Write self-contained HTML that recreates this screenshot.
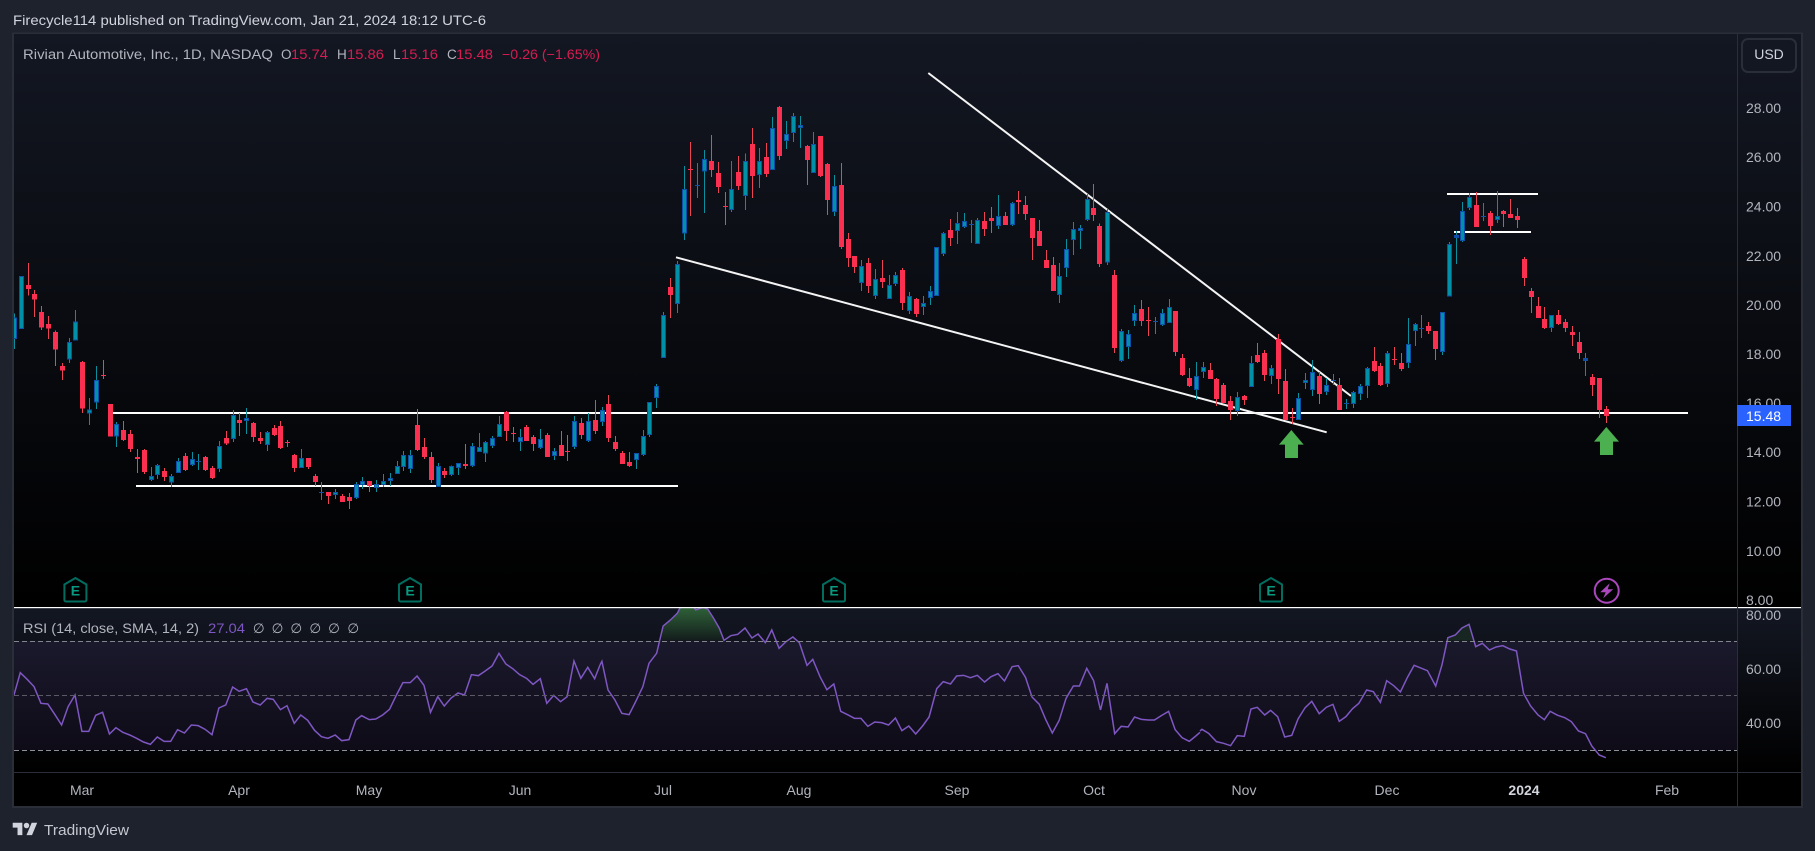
<!DOCTYPE html>
<html>
<head>
<meta charset="utf-8">
<title>Rivian Automotive, Inc. chart</title>
<style>
html,body{margin:0;padding:0;background:#1e222d;width:1815px;height:851px;overflow:hidden}
svg{display:block}
text{font-family:"Liberation Sans","DejaVu Sans",sans-serif}
.rw{stroke:#ec4452;stroke-width:3;fill:none}
.rb{stroke:#fb2f50;stroke-width:15;fill:none}
.tw{stroke:#0a8f9f;stroke-width:3;fill:none}
.tb{fill:#0090a8;stroke:#0f4fa8;stroke-width:3}
.bd{stroke:#0f4fa8;stroke-width:15;fill:none}
.ax{fill:#b2b5be;font-size:14px}
.lg{fill:#b2b5be;font-size:13.5px}
.rd{fill:#d81b50;font-size:13.5px}
.e{fill:none;stroke:#006d5f;stroke-width:2}
.et{fill:#089981;font-size:14px;font-weight:bold;text-anchor:middle}
.rsi{fill:none;stroke:#7e57c2;stroke-width:1.5;vector-effect:non-scaling-stroke}
.tm{fill:#b2b5be;font-size:14px;text-anchor:middle}
</style>
</head>
<body>
<svg xmlns="http://www.w3.org/2000/svg" width="1815" height="851" viewBox="0 0 1815 851">
<defs>
<linearGradient id="g1" x1="0" y1="0" x2="0" y2="1"><stop offset="0" stop-color="#131722"/><stop offset="1" stop-color="#000"/></linearGradient>
<linearGradient id="gg" gradientUnits="userSpaceOnUse" x1="0" y1="112" x2="0" y2="212"><stop offset="0" stop-color="#2f6238"/><stop offset="1" stop-color="#131c1c"/></linearGradient>
<clipPath id="cm"><rect x="14" y="34" width="1723" height="573"/></clipPath>
<clipPath id="cr"><rect x="14" y="608" width="1723" height="164"/></clipPath>
</defs>

<rect width="1815" height="851" fill="#1e222d"/>
<rect x="13" y="33.5" width="1789" height="773.5" fill="none" stroke="#2a2e39" stroke-width="2"/>
<rect x="14" y="34" width="1787" height="573" fill="url(#g1)"/>
<rect x="14" y="608" width="1787" height="165" fill="url(#g1)"/>
<rect x="14" y="773" width="1787" height="33" fill="#000"/>

<!-- header text -->
<text x="13" y="25" font-size="14" fill="#d1d4dc" textLength="473" lengthAdjust="spacingAndGlyphs">Firecycle114 published on TradingView.com, Jan 21, 2024 18:12 UTC-6</text>
<text x="23" y="59" class="lg" textLength="250" lengthAdjust="spacingAndGlyphs">Rivian Automotive, Inc., 1D, NASDAQ</text>
<text x="281" y="59" class="lg">O</text><text x="291" y="59" class="rd" textLength="37" lengthAdjust="spacingAndGlyphs">15.74</text>
<text x="337" y="59" class="lg">H</text><text x="347" y="59" class="rd" textLength="37" lengthAdjust="spacingAndGlyphs">15.86</text>
<text x="393" y="59" class="lg">L</text><text x="401" y="59" class="rd" textLength="37" lengthAdjust="spacingAndGlyphs">15.16</text>
<text x="447" y="59" class="lg">C</text><text x="456" y="59" class="rd" textLength="37" lengthAdjust="spacingAndGlyphs">15.48</text>
<text x="502" y="59" class="rd" textLength="98" lengthAdjust="spacingAndGlyphs">−0.26 (−1.65%)</text>

<!-- main chart -->
<g clip-path="url(#cm)">
<!-- drawn lines, below candles -->
<g fill="#fff">
<rect x="110" y="412" width="1578" height="2"/>
<rect x="136" y="485" width="542" height="2"/>
<rect x="1447" y="193" width="91" height="2"/>
<rect x="1454" y="231" width="77" height="2"/>
</g>
<path d="M676 257.3L1326.7 432.3M928.3 73L1351 396" stroke="#f4f4f4" stroke-width="2" fill="none"/>

<g shape-rendering="crispEdges">
<g transform="translate(0,240) scale(.33333)">
<path class="rw" d="M85 69V167M103 150V231M124 198V270M145 228V297M166 272V378M187 369V420M247 363V519M310 360V417M370 543V603M391 570V636M412 627V699M433 627V702M493 684V723M556 639V693M616 648V693M637 678V717M679 573V615M718 519V588M760 546V606M781 576V612M823 555V588M841 543V627M862 600V621M883 642V696M925 654V687M946 702V738M985 756V792M1027 762V786M1048 759V807M1108 723V756M1252 507V633M1273 594V657M1294 636V729M1333 684V714"/>
<path class="rb" d="M85 135V147M103 162V179M124 216V263M145 252V266M166 276V329M187 378V392M247 366V506M310 405V408M331 492V590M370 570V600M391 582V627M412 651V657M433 630V696M493 693V711M556 648V690M616 651V690M637 684V714M679 594V610M718 540V549M760 549V591M781 594V603M823 564V585M841 558V624M862 606V609M883 645V684M925 654V681M946 708V726M985 756V768M1027 768V786M1048 771V783M1108 723V738M1252 555V630M1273 621V651M1294 651V720M1333 693V705"/>
<path class="tw" d="M43 220V327M208 294V369M226 210V302M268 474V555M289 378V507M349 546V621M454 681V723M472 672V717M514 702V741M535 654V699M577 636V678M595 642V690M658 603V696M700 510V606M739 504V582M802 573V633M904 627V684M964 726V780M1006 747V777M1069 726V777M1087 711V747M1129 720V756M1150 702V741M1171 699V738M1192 663V702M1210 633V693M1231 630V699M1315 669V741"/>
<path class="tb" d="M37 234h12V296h-12zM58 110h12V266h-12zM202 308h12V357h-12zM220 246h12V300h-12zM262 510h12V519h-12zM283 422h12V486h-12zM343 554h12V588h-12zM448 710h12V718h-12zM466 677h12V703h-12zM508 710h12V726h-12zM529 665h12V697h-12zM571 659h12V673h-12zM652 620h12V685h-12zM694 527h12V595h-12zM733 536h12V541h-12zM796 578h12V613h-12zM898 656h12V682h-12zM1000 758h12V763h-12zM1063 734h12V772h-12zM1081 725h12V733h-12zM1123 734h12V742h-12zM1144 725h12V733h-12zM1165 716h12V721h-12zM1186 680h12V700h-12zM1204 647h12V679h-12zM1225 647h12V685h-12zM1309 680h12V739h-12z"/>
<path class="bd" d="M595 663V666M964 756V759"/>
</g>
<g transform="translate(450,240) scale(.33333)">
<path class="rw" d="M46 612V687M169 513V603M190 561V606M229 555V603M250 585V633M292 579V651M334 573V648M352 585V663M394 534V597M436 480V582M475 465V606M496 588V633M517 633V672M538 636V681M661 114V234"/>
<path class="rb" d="M46 672V678M169 516V573M190 579V582M229 561V603M250 591V612M292 585V651M334 615V648M352 633V636M394 549V585M436 540V573M475 492V594M496 606V627M517 639V672M538 666V678M661 141V165"/>
<path class="tw" d="M4 676V708M25 669V705M67 609V681M88 579V636M106 603V666M127 588V624M148 528V591M211 567V633M271 567V627M313 624V660M373 528V627M415 519V606M457 501V558M559 639V687M580 570V648M598 486V591M619 432V504M640 216V354M682 63V219"/>
<path class="tb" d="M-2 680h12V703h-12zM19 671h12V682h-12zM61 620h12V676h-12zM82 623h12V634h-12zM100 608h12V639h-12zM121 596h12V616h-12zM142 554h12V589h-12zM205 593h12V604h-12zM265 599h12V622h-12zM307 635h12V646h-12zM367 545h12V619h-12zM409 545h12V601h-12zM451 512h12V544h-12zM553 641h12V658h-12zM574 590h12V643h-12zM592 488h12V583h-12zM613 440h12V472h-12zM634 227h12V352h-12zM676 74h12V190h-12z"/>
</g>
<g transform="translate(650,90) scale(.33333)">
<path class="rw" d="M121 156V378M184 135V261M205 216V309M226 306V405M265 198V300M307 114V324M349 159V261M388 48V210M472 165V285M511 138V261M532 219V375M574 219V477M595 429V531M613 498V549M655 504V609M697 510V594M757 534V660M799 624V681M901 387V468M1003 366V438M1024 351V429M1066 366V405M1105 303V372M1126 318V390M1147 384V510M1168 390V468M1189 480V534M1210 501V603M1330 282V393M1348 400V531"/>
<path class="rb" d="M121 237V240M184 213V240M205 249V291M226 348V351M265 246V288M307 162V258M349 201V252M388 51V198M472 168V210M511 138V258M532 222V330M574 285V471M595 447V504M613 498V531M655 519V588M697 564V576M757 540V639M799 627V672M901 420V444M1003 393V417M1024 384V393M1066 378V405M1105 330V336M1126 345V372M1147 384V444M1168 423V468M1189 510V534M1210 525V603M1330 354V375M1348 408V522"/>
<path class="tw" d="M103 228V450M142 219V324M163 180V369M244 213V366M286 190V360M328 174V294M367 81V240M409 93V177M430 69V156M451 78V174M490 126V249M553 255V378M634 510V603M676 537V627M718 555V627M736 546V588M778 606V672M820 618V675M841 588V645M880 426V498M922 366V462M943 369V414M964 390V459M982 384V462M1045 315V417M1087 336V408M1228 519V639M1249 447V561M1270 396V495M1291 405V477M1312 312V393"/>
<path class="tb" d="M97 299h12V429h-12zM157 209h12V243h-12zM238 299h12V358h-12zM280 215h12V316h-12zM322 215h12V253h-12zM361 116h12V238h-12zM403 134h12V151h-12zM424 80h12V127h-12zM445 107h12V112h-12zM484 164h12V247h-12zM547 290h12V364h-12zM628 530h12V577h-12zM670 569h12V616h-12zM712 587h12V625h-12zM730 557h12V580h-12zM772 620h12V661h-12zM814 641h12V649h-12zM835 605h12V622h-12zM853 473h12V616h-12zM874 431h12V490h-12zM916 401h12V421h-12zM937 395h12V409h-12zM976 392h12V460h-12zM1039 380h12V406h-12zM1081 341h12V403h-12zM1222 560h12V613h-12zM1243 479h12V532h-12zM1264 419h12V448h-12zM1285 416h12V421h-12zM1306 329h12V388h-12z"/>
<path class="bd" d="M142 285V288M964 402V405"/>
</g>
<g transform="translate(1050,260) scale(.33333)">
<path class="rw" d="M193 30V279M274 120V198M295 141V228M376 153V288M397 282V348M418 324V381M481 309V357M499 354V438M520 369V432M541 408V480M583 405V435M622 249V309M643 270V363M685 222V402M706 327V480M727 444V492M808 336V432M868 354V450M973 261V336M991 309V378M1033 261V315M1054 279V333M1135 186V222M1156 213V300"/>
<path class="rb" d="M193 45V264M274 147V183M295 180V183M376 153V276M397 294V345M418 354V378M481 330V357M499 357V417M520 375V429M541 423V450M583 408V420M622 285V306M643 279V345M685 237V357M706 363V480M727 471V474M808 348V402M868 375V450M973 303V333M991 318V375M1033 297V300M1054 309V327M1135 198V213M1156 213V267"/>
<path class="tw" d="M172 -156V15M214 207V306M235 210V297M253 135V198M316 171V222M337 147V198M358 117V189M439 306V420M460 306V354M562 396V468M604 288V381M664 315V372M745 399V480M766 339V387M787 300V408M829 354V405M850 342V375M889 417V447M910 393V444M931 372V420M952 321V414M1012 273V381M1075 174V324M1096 189V258M1114 165V234M1177 156V285"/>
<path class="tb" d="M166 -142h12V6h-12zM208 215h12V301h-12zM229 224h12V259h-12zM247 161h12V181h-12zM331 161h12V193h-12zM352 143h12V187h-12zM433 350h12V388h-12zM454 323h12V334h-12zM556 413h12V451h-12zM598 311h12V379h-12zM658 326h12V346h-12zM739 416h12V478h-12zM760 362h12V367h-12zM781 338h12V388h-12zM823 377h12V394h-12zM904 398h12V430h-12zM925 380h12V400h-12zM946 326h12V376h-12zM1006 281h12V370h-12zM1069 254h12V307h-12zM1090 194h12V211h-12zM1171 158h12V274h-12z"/>
<path class="bd" d="M316 183V186M850 360V363M889 429V432M1114 204V207"/>
</g>
<g transform="translate(1420,170) scale(.33333)">
<path class="rw" d="M169 66V171M211 123V195M250 120V171M271 87V144M292 114V174M313 261V348M334 354V429M355 381V444M373 411V477M415 420V465M436 447V486M457 468V528M478 486V567M517 612V678M538 624V744M559 708V759"/>
<path class="rb" d="M169 105V171M211 129V168M250 123V132M271 132V144M292 138V150M313 267V324M334 363V381M355 408V444M373 447V474M415 435V462M436 456V474M457 486V495M478 516V549M517 621V645M538 624V720M559 717V738"/>
<path class="tw" d="M88 216V380M109 183V282M127 96V216M148 69V120M190 99V153M232 63V159M394 435V486M496 549V618"/>
<path class="tb" d="M82 224h12V378h-12zM121 125h12V211h-12zM142 83h12V112h-12zM226 140h12V148h-12zM388 437h12V472h-12z"/>
<path class="bd" d="M109 195V204M190 138V141M496 564V573"/>
</g>
</g>

<!-- arrows -->
<g transform="translate(1050,260) scale(.33333)"><path d="M724 510L761 554H744V594H705V554H687Z" fill="#4caf50"/></g>
<g transform="translate(1420,170) scale(.33333)"><path d="M559 771L597 815H579V855H540V815H522Z" fill="#4caf50"/></g>

<!-- earnings -->
<g transform="translate(75.4,577)"><path class="e" d="M0 1L11 7.5V23a1.5 1.5 0 0 1-1.5 1.5H-9.5A1.5 1.5 0 0 1-11 23V7.5Z"/><text class="et" y="18.5">E</text></g>
<g transform="translate(410,577)"><path class="e" d="M0 1L11 7.5V23a1.5 1.5 0 0 1-1.5 1.5H-9.5A1.5 1.5 0 0 1-11 23V7.5Z"/><text class="et" y="18.5">E</text></g>
<g transform="translate(834,577)"><path class="e" d="M0 1L11 7.5V23a1.5 1.5 0 0 1-1.5 1.5H-9.5A1.5 1.5 0 0 1-11 23V7.5Z"/><text class="et" y="18.5">E</text></g>
<g transform="translate(1271,577)"><path class="e" d="M0 1L11 7.5V23a1.5 1.5 0 0 1-1.5 1.5H-9.5A1.5 1.5 0 0 1-11 23V7.5Z"/><text class="et" y="18.5">E</text></g>
<g transform="translate(1606.7,590.7)"><circle r="12" fill="none" stroke="#ab47bc" stroke-width="2"/><path d="M3-7.5L-6.5 1.5H-1L-3.5 7.5L6.5-1.5H1Z" fill="#ab47bc"/></g>
</g>

<!-- RSI -->
<rect x="14" y="641" width="1723" height="109" fill="#7e57c2" fill-opacity=".1"/>
<g clip-path="url(#cr)">
<g transform="translate(600,570) scale(.38265,.33333)"><path d="M160 212L165 168L184 150L202 130L215 100L250 100L282 118L297 145L312 175L324 212Z" fill="url(#gg)"/></g>
<g transform="translate(1200,570) scale(.39216,.33333)"><path d="M632 212V203L651 195L668 174L686 163L698 212Z" fill="#172621"/></g>
<g transform="translate(0,570) scale(.38265,.33333)"><path class="rsi" d="M36 377L53 308L71 328L89 350L107 400L125 402L143 433L161 465L178 410L196 375L214 484L232 484L250 436L268 427L286 492L303 473L321 487L339 495L357 505L375 516L393 523L411 501L429 514L446 514L464 479L482 489L500 465L518 467L536 478L554 494L572 414L590 405L608 351L625 364L644 356L661 396L680 405L698 385L714 388L733 419L750 407L769 460L786 435L804 451L822 481L840 500L857 505L876 495L893 512L912 509L930 450L945 437L965 449L982 447L1000 435L1018 418L1036 375L1053 338L1072 338L1090 318L1108 346L1125 427L1144 380L1161 408L1179 384L1197 369L1214 375L1232 314L1250 317L1268 303L1286 288L1304 250L1322 282L1340 296L1358 314L1376 325L1393 343L1412 326L1429 400L1447 376L1465 395L1482 380L1500 273L1518 325L1536 292L1554 326L1568 285"/></g>
<g transform="translate(600,570) scale(.38265,.33333)"><path class="rsi" d="M0 285L5 274L21 360L39 390L57 430L76 434L94 393L112 350L128 280L148 250L165 168L184 150L202 130L215 100L235 90L250 120L270 112L282 118L297 145L312 175L324 211L342 197L360 193L379 174L397 204L413 192L432 218L449 180L468 235L486 215L504 201L521 218L541 286L556 268L575 320L593 359L611 342L629 424L647 434L665 445L682 445L700 469L718 456L736 458L754 465L772 444L789 482L807 468L825 492L843 468L860 441L880 356L897 335L916 342L932 318L950 316L968 323L986 316L1005 336L1022 320L1040 311L1057 333L1077 290L1093 287L1112 322L1129 381L1148 403L1165 449L1182 489L1200 451L1218 385L1237 348L1253 348L1272 295L1290 332L1308 420L1325 340L1345 491L1362 469L1380 471L1397 441L1415 448L1433 450L1449 450L1468 436L1486 424L1503 479L1521 503L1540 514L1557 498L1568 487"/></g>
<g transform="translate(1200,570) scale(.39216,.33333)"><path class="rsi" d="M0 483L5 478L22 490L42 515L60 520L78 527L95 497L113 499L130 417L146 412L165 435L180 421L198 440L216 501L234 496L250 447L268 413L285 394L304 431L322 412L339 403L355 454L372 440L389 416L405 400L425 360L442 365L460 397L476 332L494 347L511 366L529 322L546 286L580 302L601 348L617 285L632 203L651 195L668 174L686 163L703 230L720 220L738 240L755 231L772 227L790 237L807 243L825 370L843 408L862 435L878 449L893 424L912 436L930 443L947 455L965 483L983 491L999 528L1018 555L1035 563"/></g>
</g>
<g fill="none" stroke-dasharray="5 3" shape-rendering="crispEdges">
<path d="M14 641.5H1737" stroke="#85858f"/>
<path d="M14 695.5H1737" stroke="#5c5a66"/>
<path d="M14 750.5H1737" stroke="#8f8f99"/>
</g>
<text x="23" y="633" class="lg" textLength="176" lengthAdjust="spacingAndGlyphs">RSI (14, close, SMA, 14, 2)</text>
<text x="208" y="633" font-size="13.5" fill="#7e57c2" textLength="37" lengthAdjust="spacingAndGlyphs">27.04</text>
<g class="lg" text-anchor="middle"><text x="258.7" y="633">∅</text><text x="277.5" y="633">∅</text><text x="296.2" y="633">∅</text><text x="315.3" y="633">∅</text><text x="334" y="633">∅</text><text x="353.2" y="633">∅</text></g>

<!-- frame lines -->
<rect x="14" y="607" width="1787" height="1.2" fill="#fff"/>
<rect x="14" y="772" width="1787" height="1" fill="#2a2e39"/>
<rect x="1737" y="34" width="1" height="772" fill="#2a2e39"/>

<!-- price axis -->
<rect x="1742" y="39" width="54" height="33" rx="6" fill="#131722" stroke="#2a2e39" stroke-width="2"/>
<text x="1769" y="59" font-size="14" fill="#d1d4dc" text-anchor="middle">USD</text>
<g class="ax">
<text x="1746" y="113">28.00</text>
<text x="1746" y="162">26.00</text>
<text x="1746" y="211.5">24.00</text>
<text x="1746" y="261">22.00</text>
<text x="1746" y="310">20.00</text>
<text x="1746" y="359">18.00</text>
<text x="1746" y="408">16.00</text>
<text x="1746" y="457">14.00</text>
<text x="1746" y="506.5">12.00</text>
<text x="1746" y="556">10.00</text>
<text x="1746" y="605">8.00</text>
<text x="1746" y="620">80.00</text>
<text x="1746" y="674">60.00</text>
<text x="1746" y="728">40.00</text>
</g>
<rect x="1737" y="405" width="54" height="21" fill="#2962ff"/>
<text x="1746" y="421" font-size="14" fill="#fff">15.48</text>

<!-- time axis -->
<g class="tm">
<text x="82" y="795">Mar</text>
<text x="239" y="795">Apr</text>
<text x="369" y="795">May</text>
<text x="520" y="795">Jun</text>
<text x="663" y="795">Jul</text>
<text x="799" y="795">Aug</text>
<text x="957" y="795">Sep</text>
<text x="1094" y="795">Oct</text>
<text x="1244" y="795">Nov</text>
<text x="1387" y="795">Dec</text>
<text x="1524" y="795" font-weight="bold" fill="#d1d4dc">2024</text>
<text x="1667" y="795">Feb</text>
</g>

<!-- logo -->
<g transform="translate(12.7,820) scale(.69)" fill="#d1d4dc"><path d="M14 22H7V11H0V4h14v18zM28 22h-8l7.5-18h8L28 22z"/><circle cx="20" cy="8" r="4"/></g>
<text x="44" y="835" font-size="15" fill="#c5c8d0" textLength="85" lengthAdjust="spacingAndGlyphs">TradingView</text>
</svg>
</body>
</html>
